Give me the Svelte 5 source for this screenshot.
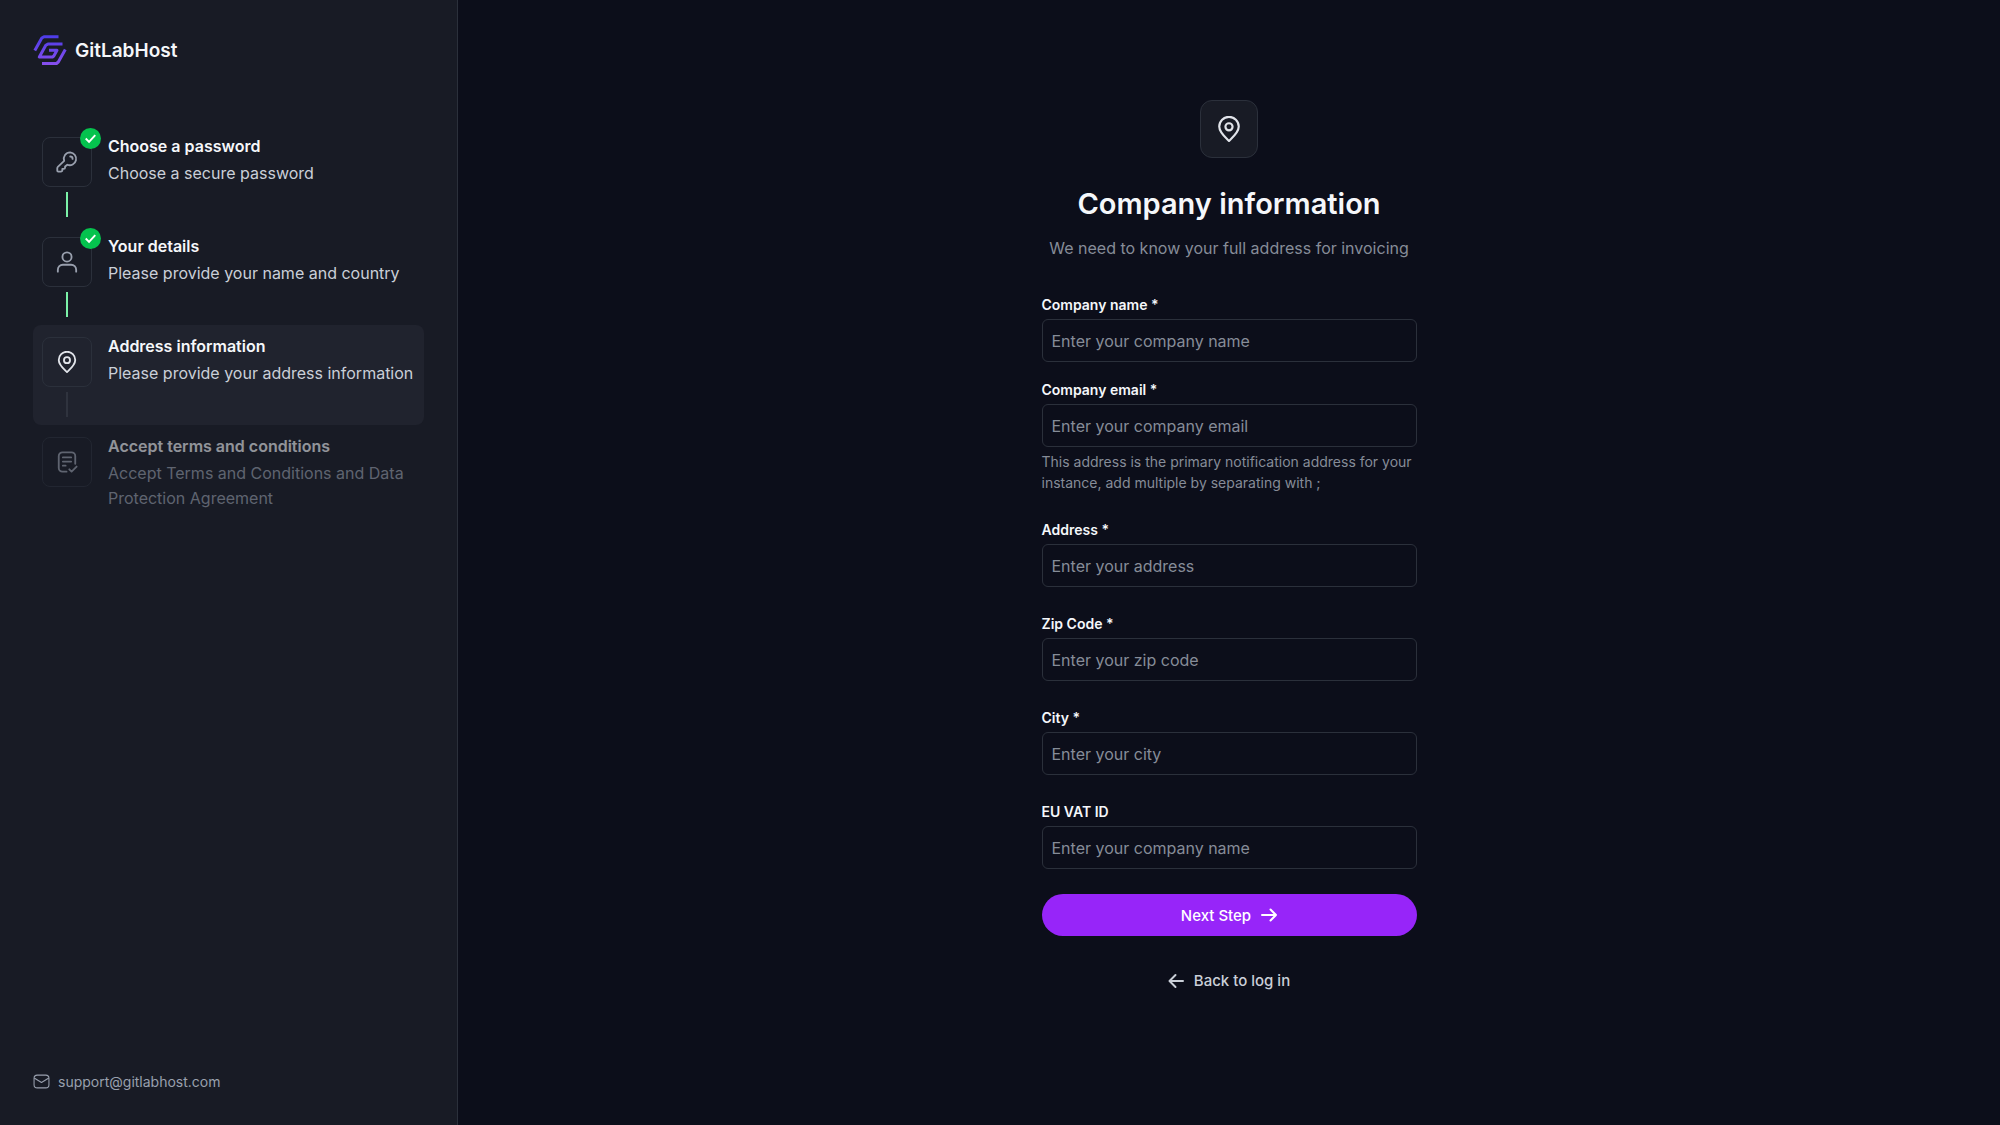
<script lang="ts">
  type Icon = 'key' | 'user' | 'pin' | 'terms';

  const steps: {
    icon: Icon;
    title: string;
    description: string;
    state: 'done' | 'active' | 'todo';
  }[] = [
    { icon: 'key', title: 'Choose a password', description: 'Choose a secure password', state: 'done' },
    { icon: 'user', title: 'Your details', description: 'Please provide your name and country', state: 'done' },
    {
      icon: 'pin',
      title: 'Address information',
      description: 'Please provide your address information',
      state: 'active',
    },
    {
      icon: 'terms',
      title: 'Accept terms and conditions',
      description: 'Accept Terms and Conditions and Data Protection Agreement',
      state: 'todo',
    },
  ];

  let values = $state({ company: '', email: '', address: '', zip: '', city: '', vat: '' });
</script>

{#snippet icon(name: Icon)}
  <svg class="icon" viewBox="0 0 24 24" aria-hidden="true">
    {#if name === 'key'}
      <path d="M15.5 1.5a7 7 0 0 0-6.6 9.3L2 17.4a2 2 0 0 0-.6 1.4V21.5a1 1 0 0 0 1 1h3a1.5 1.5 0 0 0 1.5-1.5v-1.5h1.5a1.5 1.5 0 0 0 1.5-1.5v-1l2.500-2a7 7 0 1 0 3.100-13.500Z" />
      <path d="M15.5 6a2.600 2.600 0 0 1 2.600 2.600" />
    {:else if name === 'user'}
      <circle cx="12" cy="6.5" r="5" />
      <path d="M2 22.500v-2a5.500 5.500 0 0 1 5.500-5.500h9a5.500 5.500 0 0 1 5.500 5.500v2" />
    {:else if name === 'pin'}
      <path d="M12 23c3.500-3.300 9-7.700 9-13.200A9 9 0 0 0 3 9.800C3 15.300 8.500 19.700 12 23Z" />
      <circle cx="12" cy="10" r="3.300" />
    {:else}
      <path d="M11.500 22.500H7a4 4 0 0 1-4-4v-13a4 4 0 0 1 4-4h10a4 4 0 0 1 4 4V14" />
      <path d="M7.500 7h9M7.500 11.500h9M7.500 16h3M14.500 20l2.500 2.500 5.500-5.500" />
    {/if}
  </svg>
{/snippet}

<div class="layout">
  <aside>
    <a class="brand" href="/">
      <svg viewBox="0 0 34 32" aria-hidden="true">
        <defs>
          <linearGradient id="brand" x1="0" y1="0" x2="0" y2="32" gradientUnits="userSpaceOnUse">
            <stop offset="0" stop-color="#4a3be8" />
            <stop offset="1" stop-color="#8a50ee" />
          </linearGradient>
        </defs>
        <g fill="none" stroke="url(#brand)" stroke-width="3" stroke-linejoin="round">
          <path d="M25.5 2.700H11L8.800 4 1.800 16.500" />
          <path d="M29.500 10H15L12.800 11.300 6.300 23H19.500L20.800 22 24 16.300H16" />
          <path d="M32.300 15.500L25.300 28 23.500 29.500H9" />
        </g>
      </svg>
      GitLabHost
    </a>

    <ol class="steps">
      {#each steps as step, i}
        <li class="step {step.state}" aria-current={step.state === 'active' ? 'step' : undefined}>
          <div class="rail">
            <div class="tile">
              {@render icon(step.icon)}
              {#if step.state === 'done'}
                <svg class="badge" viewBox="0 0 22 22" aria-hidden="true">
                  <circle cx="11" cy="11" r="11" />
                  <path d="M6 11l3.500 3.500L16 7.500" />
                </svg>
              {/if}
            </div>
            {#if i < steps.length - 1}
              <span class="line"></span>
            {/if}
          </div>
          <div class="text">
            <h2>{step.title}</h2>
            <p>{step.description}</p>
          </div>
        </li>
      {/each}
    </ol>

    <a class="support" href="mailto:support@gitlabhost.com">
      <svg class="icon" viewBox="0 0 16 16" aria-hidden="true">
        <rect x="1" y="2" width="14" height="12" rx="3" />
        <path d="M1.500 5L8 9l6.500-4" />
      </svg>
      support@gitlabhost.com
    </a>
  </aside>

  <main>
    <div class="hero">
      {@render icon('pin')}
    </div>
    <h1>Company information</h1>
    <p class="intro">We need to know your full address for invoicing</p>

    <form onsubmit={(e) => e.preventDefault()}>
      <div class="field compact">
        <label for="company">Company name *</label>
        <input id="company" type="text" placeholder="Enter your company name" bind:value={values.company} />
      </div>
      <div class="field">
        <label for="email">Company email *</label>
        <input
          id="email"
          type="text"
          placeholder="Enter your company email"
          aria-describedby="email-hint"
          bind:value={values.email} />
        <p id="email-hint">
          This address is the primary notification address for your instance, add multiple by separating with ;
        </p>
      </div>
      <div class="field">
        <label for="address">Address *</label>
        <input id="address" type="text" placeholder="Enter your address" bind:value={values.address} />
      </div>
      <div class="field">
        <label for="zip">Zip Code *</label>
        <input id="zip" type="text" placeholder="Enter your zip code" bind:value={values.zip} />
      </div>
      <div class="field">
        <label for="city">City *</label>
        <input id="city" type="text" placeholder="Enter your city" bind:value={values.city} />
      </div>
      <div class="field">
        <label for="vat">EU VAT ID</label>
        <input id="vat" type="text" placeholder="Enter your company name" bind:value={values.vat} />
      </div>

      <button type="submit">
        Next Step
        <svg class="icon" viewBox="0 0 16 16" aria-hidden="true">
          <path d="M1 8h14M9.500 2.500L15 8l-5.500 5.500" />
        </svg>
      </button>
    </form>

    <a class="back" href="/login">
      <svg class="icon" viewBox="0 0 16 16" aria-hidden="true">
        <path d="M15 8H2M7.500 2L1.500 8l6 6" />
      </svg>
      Back to log in
    </a>
  </main>
</div>

<style>
  :global(body) {
    background: #0c0e1a;
  }

  .layout {
    display: flex;
    min-height: 100vh;
    font-family: Inter, 'Liberation Sans', sans-serif;
    font-size: 16px;
    line-height: 25px;
    color: #f5f7fa;
  }

  h1,
  h2,
  p {
    margin: 0;
  }

  a {
    color: inherit;
    text-decoration: none;
  }

  .icon {
    fill: none;
    stroke: currentColor;
    stroke-width: 2;
    stroke-linecap: round;
    stroke-linejoin: round;
    flex-shrink: 0;
  }

  aside {
    box-sizing: border-box;
    width: 458px;
    flex-shrink: 0;
    display: flex;
    flex-direction: column;
    padding: 33px;
    background: #181b25;
    border-right: 1px solid #2b303b;
  }

  .brand {
    display: flex;
    align-items: center;
    gap: 8px;
    height: 34px;
    font-size: 19px;
    font-weight: 600;
  }

  .brand svg {
    width: 34px;
    height: 32px;
  }

  .steps {
    list-style: none;
    margin: 58px 0 0;
    padding: 0;
    flex-grow: 1;
  }

  .step {
    box-sizing: border-box;
    min-height: 100px;
    display: flex;
    gap: 16px;
    padding: 9px 9px 8px;
    border-radius: 8px;
  }

  .step.active {
    background: #20232e;
  }

  .step.todo {
    opacity: 0.55;
  }

  .rail {
    display: flex;
    flex-direction: column;
    align-items: center;
    gap: 5px;
    padding-top: 3px;
  }

  .tile {
    position: relative;
    box-sizing: border-box;
    width: 50px;
    height: 50px;
    display: grid;
    place-items: center;
    border: 1px solid #2b303b;
    border-radius: 8px;
    color: #99a0ae;
  }

  .active .tile {
    color: #e1e4ea;
  }

  .tile .icon {
    width: 22px;
    height: 22px;
  }

  .badge {
    position: absolute;
    top: -10px;
    right: -10px;
    width: 21px;
    height: 21px;
  }

  .badge circle {
    fill: #05c34e;
  }

  .badge path {
    fill: none;
    stroke: #fff;
    stroke-width: 2;
  }

  .line {
    width: 2px;
    height: 25px;
    background: #2f333e;
  }

  .done .line {
    background: #7bf1a8;
  }

  h2 {
    font-size: 16px;
    font-weight: 600;
  }

  .text p {
    margin-top: 2px;
    color: #cacfd8;
  }

  .todo .text p {
    color: #99a0ae;
  }

  .support {
    display: flex;
    align-items: center;
    gap: 8px;
    font-size: 14px;
    line-height: 21px;
    color: #99a0ae;
  }

  .support .icon {
    width: 17px;
    height: 17px;
    stroke-width: 1;
  }

  main {
    flex: 1;
    display: flex;
    flex-direction: column;
    align-items: center;
    padding: 100px 24px;
  }

  .hero {
    box-sizing: border-box;
    width: 58px;
    height: 58px;
    display: grid;
    place-items: center;
    background: #181b25;
    border: 1px solid #2b303b;
    border-radius: 12px;
    color: #e1e4ea;
  }

  .hero .icon {
    width: 26px;
    height: 26px;
  }

  h1 {
    margin-top: 25px;
    font-size: 29px;
    line-height: 42px;
    font-weight: 600;
  }

  .intro {
    margin-top: 11px;
    color: #868c98;
  }

  form {
    width: 100%;
    max-width: 375px;
    margin-top: 33px;
  }

  .field {
    display: flex;
    flex-direction: column;
    margin-bottom: 26px;
  }

  .field.compact {
    margin-bottom: 17px;
  }

  .field:last-of-type {
    margin-bottom: 25px;
  }

  label {
    margin-bottom: 3px;
    font-size: 14px;
    line-height: 22px;
    font-weight: 600;
  }

  input {
    box-sizing: border-box;
    height: 43px;
    padding: 0 9px;
    font: inherit;
    color: inherit;
    background: transparent;
    border: 1px solid #2b303b;
    border-radius: 6px;
  }

  input::placeholder {
    color: #868c98;
    opacity: 1;
  }

  input:focus,
  button:focus-visible {
    outline: 2px solid #9725f9;
  }

  .field p {
    margin-top: 4px;
    font-size: 14px;
    line-height: 21px;
    color: #868c98;
  }

  button {
    display: flex;
    align-items: center;
    justify-content: center;
    gap: 10px;
    width: 100%;
    height: 42px;
    border: 0;
    border-radius: 21px;
    background: #9725f9;
    color: #fff;
    font: inherit;
    font-size: 15px;
    font-weight: 500;
    cursor: pointer;
  }

  button .icon,
  .back .icon {
    width: 16px;
    height: 16px;
    stroke-width: 2;
  }

  .back {
    display: flex;
    align-items: center;
    gap: 10px;
    margin-top: 35px;
    font-size: 15px;
    line-height: 20px;
    font-weight: 500;
    color: #cacfd8;
  }
</style>
